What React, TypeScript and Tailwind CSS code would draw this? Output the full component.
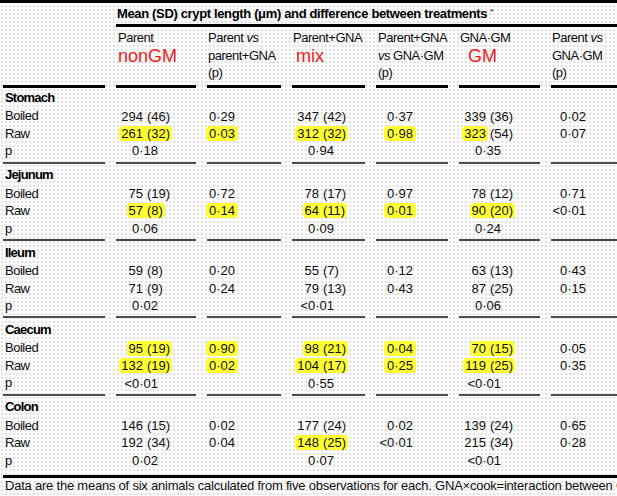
import React from 'react';

type Hl = 'all' | 'mean';

interface Section {
  name: string;
  boiled: string[];
  raw: string[];
  p: string[];
  hlBoiled?: Record<number, Hl>;
  hlRaw?: Record<number, Hl>;
}

const sections: Section[] = [
  {
    name: 'Stomach',
    boiled: ['294 (46)', '0·29', '347 (42)', '0·37', '339 (36)', '0·02'],
    raw: ['261 (32)', '0·03', '312 (32)', '0·98', '323 (54)', '0·07'],
    p: ['0·18', '0·94', '0·35'],
    hlRaw: { 0: 'all', 1: 'all', 2: 'all', 3: 'all', 4: 'mean' },
  },
  {
    name: 'Jejunum',
    boiled: ['75 (19)', '0·72', '78 (17)', '0·97', '78 (12)', '0·71'],
    raw: ['57 (8)', '0·14', '64 (11)', '0·01', '90 (20)', '<0·01'],
    p: ['0·06', '0·09', '0·24'],
    hlRaw: { 0: 'all', 1: 'all', 2: 'all', 3: 'all', 4: 'all' },
  },
  {
    name: 'Ileum',
    boiled: ['59 (8)', '0·20', '55 (7)', '0·12', '63 (13)', '0·43'],
    raw: ['71 (9)', '0·24', '79 (13)', '0·43', '87 (25)', '0·15'],
    p: ['0·02', '<0·01', '0·06'],
  },
  {
    name: 'Caecum',
    boiled: ['95 (19)', '0·90', '98 (21)', '0·04', '70 (15)', '0·05'],
    raw: ['132 (19)', '0·02', '104 (17)', '0·25', '119 (25)', '0·35'],
    p: ['<0·01', '0·55', '<0·01'],
    hlBoiled: { 0: 'all', 1: 'all', 2: 'all', 3: 'all', 4: 'all' },
    hlRaw: { 0: 'all', 1: 'all', 2: 'all', 3: 'all', 4: 'all' },
  },
  {
    name: 'Colon',
    boiled: ['146 (15)', '0·02', '177 (24)', '0·02', '139 (24)', '0·65'],
    raw: ['192 (34)', '0·04', '148 (25)', '<0·01', '215 (34)', '0·28'],
    p: ['0·02', '0·07', '<0·01'],
    hlRaw: { 2: 'all' },
  },
];

const GRID = 'grid grid-cols-[102px_80px_74px_73px_72px_81px_66px] gap-x-[11px] pl-[3px]';
const HL = 'bg-[#ffff33]';
// right edge of p-values in the three "vs" columns, from the cell start
const pBox = ['w-[28px]', 'w-[37px]', 'w-[35px]'];

const MeanCell: React.FC<{ value: string; hl?: Hl }> = ({ value, hl }) => {
  const [mean, sd] = value.split(' ');
  const meanCls =
    hl === 'all'
      ? `${HL} rounded-l-[4px] -ml-[2px] pl-[2px]`
      : hl === 'mean'
        ? `${HL} rounded-[4px] -mx-[2px] px-[2px]`
        : '';
  return (
    <div className="flex items-center">
      <div className="w-[27px] flex justify-end">
        <span className={`inline-block leading-[15px] ${meanCls}`}>{mean}</span>
      </div>
      <span
        className={`inline-block leading-[15px] pl-[4px] ${hl === 'all' ? `${HL} rounded-r-[4px] pr-[2px]` : ''}`}
      >
        {sd}
      </span>
    </div>
  );
};

const PCell: React.FC<{ value: string; box: string; hl?: Hl }> = ({ value, box, hl }) => (
  <div className={`${box} flex justify-end`}>
    <span className={`inline-block leading-[15px] ${hl ? `${HL} rounded-[4px] -mx-[3px] px-[3px]` : ''}`}>
      {value}
    </span>
  </div>
);

const DataRow: React.FC<{ label: string; values: string[]; hl?: Record<number, Hl> }> = ({
  label,
  values,
  hl = {},
}) => (
  <div className={`${GRID} h-[17.4px] items-center`}>
    <div className="pl-[2px] tracking-[-0.5px]">{label}</div>
    {values.map((v, i) =>
      i % 2 === 0 ? (
        <MeanCell key={i} value={v} hl={hl[i]} />
      ) : (
        <PCell key={i} value={v} box={pBox[(i - 1) / 2]} hl={hl[i]} />
      )
    )}
  </div>
);

const PRow: React.FC<{ values: string[] }> = ({ values }) => (
  <div className={`${GRID} h-[17.4px] items-center`}>
    <div className="pl-[2px]">p</div>
    {[0, 1, 2, 3, 4, 5].map((i) =>
      i % 2 === 0 ? <PCell key={i} value={values[i / 2]} box="w-[42px]" /> : <div key={i} />
    )}
  </div>
);

const Rule: React.FC<{ className: string }> = ({ className }) => (
  <div className={GRID}>
    {[0, 1, 2, 3, 4, 5, 6].map((i) => (
      <div key={i} className={className} />
    ))}
  </div>
);

export default function App() {
  return (
    <div className="w-[617px] h-[496px] overflow-hidden bg-[#fbfbfb] bg-[radial-gradient(#e2e2e2_0.7px,transparent_1px)] bg-[length:4px_4px] text-[13px] text-[#111] font-['Liberation_Sans',Arial,sans-serif]">
      <div className="h-[3px] bg-black" />
      <div className="pl-[117px] leading-[21px] font-bold tracking-[-0.35px] text-black">
        Mean (SD) crypt length (μm) and difference between treatments
        <sup className="ml-[3px] text-[8px] font-normal">*</sup>
      </div>
      <div className="ml-[116px] h-[3px] bg-black" />

      <div className={`${GRID} pt-[2px] pb-[3.5px] leading-[17.5px] tracking-[-0.5px]`}>
        <div />
        <div className="pl-[2px]">
          <div>Parent</div>
          <div className="text-[18px] leading-[19px] tracking-normal text-[#f01d1d]">nonGM</div>
        </div>
        <div className="pl-[1px]">
          <div>
            Parent <i>vs</i>
          </div>
          <div>parent+GNA</div>
          <div>(p)</div>
        </div>
        <div className="pl-[1px]">
          <div>Parent+GNA</div>
          <div className="pl-[3px] text-[18px] leading-[19px] tracking-normal text-[#f01d1d]">mix</div>
        </div>
        <div className="pl-[2px]">
          <div>Parent+GNA</div>
          <div>
            <i>vs</i> GNA·GM
          </div>
          <div>(p)</div>
        </div>
        <div className="pl-[1px]">
          <div>GNA·GM</div>
          <div className="pl-[8px] text-[18px] leading-[19px] tracking-normal text-[#f01d1d]">GM</div>
        </div>
        <div className="pl-[1px]">
          <div>
            Parent <i>vs</i>
          </div>
          <div>GNA·GM</div>
          <div>(p)</div>
        </div>
      </div>
      <Rule className="h-[3px] bg-black" />

      <div className="pt-[1px]">
        {sections.map((s, idx) => (
          <div key={s.name}>
            <div className="h-[17.4px] flex items-center pl-[5px] font-bold tracking-[-0.8px] text-black">
              {s.name}
            </div>
            <DataRow label="Boiled" values={s.boiled} hl={s.hlBoiled} />
            <DataRow label="Raw" values={s.raw} hl={s.hlRaw} />
            <PRow values={s.p} />
            {idx < sections.length - 1 ? (
              <div className="mt-[3px] mb-[2.8px]">
                <Rule className="h-[2px] bg-[#4a4a4a]" />
              </div>
            ) : (
              <div className="mt-[7px] ml-[3px] h-[3px] bg-black" />
            )}
          </div>
        ))}
      </div>

      <div className="pl-[5px] leading-[16px] tracking-[-0.22px] whitespace-nowrap">
        Data are the means of six animals calculated from five observations for each. GNA×cook=interaction between GNA
        and cooking.
      </div>
    </div>
  );
}
